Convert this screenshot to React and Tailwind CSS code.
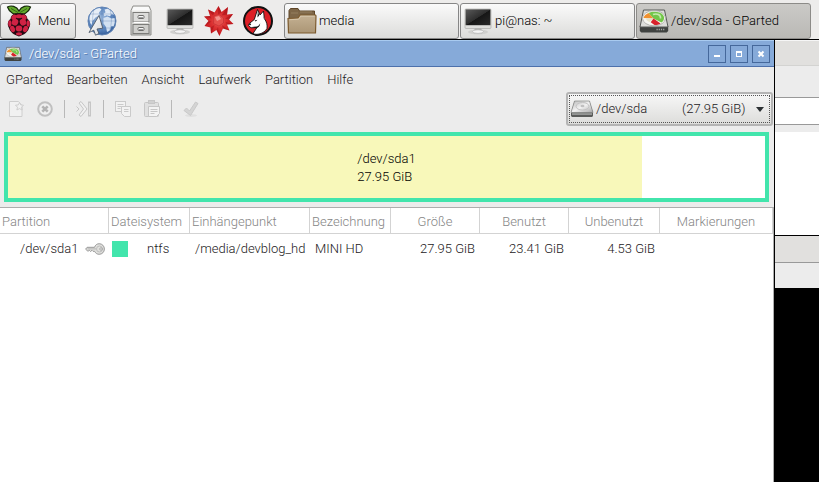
import { useState } from "react";

const MonitorIcon = () => (
  <svg width="28" height="28" viewBox="0 0 28 28" aria-hidden="true">
    <defs>
      <linearGradient id="screen" x1="0" y1="0" x2="1" y2="1">
        <stop offset="0" stopColor="#5a5a5a" />
        <stop offset="0.5" stopColor="#2e2e2e" />
        <stop offset="0.52" stopColor="#161616" />
        <stop offset="1" stopColor="#2a2a2a" />
      </linearGradient>
    </defs>
    <ellipse cx="14" cy="25" rx="10" ry="2.6" fill="#d0d0ce" />
    <path d="M11 21h6l1 3h-8z" fill="#b4b4b2" />
    <ellipse cx="14" cy="24.6" rx="5.5" ry="1.8" fill="#f4f4f4" stroke="#aaa" strokeWidth="0.6" />
    <rect x="1" y="2" width="26" height="19.5" rx="1" fill="#dededc" stroke="#a5a5a3" strokeWidth="0.6" />
    <rect x="1.6" y="2.4" width="24.8" height="15.8" fill="url(#screen)" />
  </svg>
);

const RaspberryIcon = () => (
  <svg width="26" height="32" viewBox="0 0 26 32" aria-hidden="true">
    <path
      d="M13 8.500C9 10.500 3.500 8 1.500 2c3.500-2 9-1 11.500 4 2.500-5 8-6 11.500-4-2 6-7.500 8.500-11.500 6.500z"
      fill="#64ab2c"
      stroke="#16280c"
      strokeWidth="1.200"
    />
    <path d="M5 3.500l7 4M21 3.500l-7 4" stroke="#25480f" strokeWidth="0.7" />
    <path
      d="M13 8.500c4-1 8 1 8.500 5.500 3 2 3.500 6 1.500 9-1 4-5 7-10 8.500-5-1.500-9-4.500-10-8.500-2-3-1.500-7 1.500-9C5 9.500 9 7.500 13 8.500z"
      fill="#250911"
    />
    <g fill="#d02244">
      <ellipse cx="13" cy="11.200" rx="3.200" ry="2" />
      <ellipse cx="8" cy="12.200" rx="2.300" ry="2.900" transform="rotate(40 8 12.200)" />
      <ellipse cx="18" cy="12.200" rx="2.300" ry="2.900" transform="rotate(-40 18 12.200)" />
      <ellipse cx="9" cy="17.200" rx="3.200" ry="3.500" transform="rotate(25 9 17.200)" />
      <ellipse cx="17" cy="17.200" rx="3.200" ry="3.500" transform="rotate(-25 17 17.200)" />
      <ellipse cx="3.800" cy="18.500" rx="1.600" ry="3.200" />
      <ellipse cx="22.200" cy="18.500" rx="1.600" ry="3.200" />
      <ellipse cx="13" cy="23.500" rx="3.300" ry="3" />
      <ellipse cx="6.600" cy="24" rx="2.300" ry="3.200" transform="rotate(-25 6.600 24)" />
      <ellipse cx="19.400" cy="24" rx="2.300" ry="3.200" transform="rotate(25 19.400 24)" />
      <ellipse cx="13" cy="28.800" rx="3" ry="1.600" />
    </g>
  </svg>
);

const GlobeIcon = () => (
  <svg width="30" height="30" viewBox="0 0 30 30" aria-hidden="true">
    <defs>
      <radialGradient id="ocean" cx="0.45" cy="0.4" r="0.62">
        <stop offset="0" stopColor="#9dbbdf" />
        <stop offset="0.7" stopColor="#5a84bc" />
        <stop offset="1" stopColor="#315a96" />
      </radialGradient>
      <linearGradient id="pointer" x1="0" y1="0" x2="1" y2="1">
        <stop offset="0" stopColor="#ffffff" />
        <stop offset="1" stopColor="#d8dadd" />
      </linearGradient>
    </defs>
    <circle cx="15" cy="15" r="14" fill="url(#ocean)" stroke="#6385b5" />
    <path d="M2.500 12C3 7 7 2.800 12.500 2l2 1.500-2.500 3 .5 2.500-4 2.500-3 3.500-1 4c-1.500-2-2.200-4.500-2-7z" fill="#e6eef7" />
    <path d="M17.500 3.500l3-.8c3 1.300 5.200 3.300 6.500 6l-2.500-.5-1.500 2-3.500-1-2 1-1-2.500 2-1.500z" fill="#dfe9f5" />
    <path d="M16.500 12l4-1.500 4 2 3-.5c.8 3 .3 6-1 8.500l-2-.5-1.500 4.500-3 1.500-1-5-2.500-3.500z" fill="#d3e1f1" />
    <path d="M15 1v28M7 3.500C5 11 5 19 8 27M23 3.500c2 8 2 15-1 23M3 8h24M1 15h28M3 22h24" stroke="#41679f" strokeWidth="0.4" fill="none" opacity="0.7" />
    <path
      d="M12 9.500L2 26.500l4.800-2.300 1.700 5 3.500-1.700-2-4.500 5.800-.8z"
      fill="url(#pointer)"
      stroke="#4e5a6a"
      strokeWidth="0.9"
    />
  </svg>
);

const CabinetIcon = () => (
  <svg width="24" height="32" viewBox="0 0 24 32" aria-hidden="true">
    <defs>
      <linearGradient id="metal" x1="0" y1="0" x2="0" y2="1">
        <stop offset="0" stopColor="#f1f1ef" />
        <stop offset="1" stopColor="#c4c4c1" />
      </linearGradient>
    </defs>
    <path d="M4 1h16l2 4.500V30H2V5.500z" fill="url(#metal)" stroke="#8f8f8c" />
    <path d="M4.600 2h14.800l1.400 3.500H3.200z" fill="#fafafa" />
    <rect x="4" y="7.500" width="16" height="9.500" fill="#dcdcda" stroke="#7d7d7a" />
    <rect x="4" y="19.500" width="16" height="9" fill="#cfcfcc" stroke="#7d7d7a" />
    <path d="M4.500 17.500h15" stroke="#fff" />
    <rect x="9" y="10.500" width="6" height="3" rx="1" fill="#f7f7f7" stroke="#6c6c6a" />
    <rect x="9" y="22.500" width="6" height="3" rx="1" fill="#f7f7f7" stroke="#6c6c6a" />
    <path d="M10 12.500h4M10 24.500h4" stroke="#777" strokeWidth="0.7" />
  </svg>
);

const BurstIcon = () => (
  <svg width="30" height="32" viewBox="0 0 30 32" aria-hidden="true">
    <defs>
      <radialGradient id="burst">
        <stop offset="0" stopColor="#f0706a" />
        <stop offset="0.45" stopColor="#dd3434" />
        <stop offset="1" stopColor="#c4161c" />
      </radialGradient>
    </defs>
    <path
      d="M14.500 1l3 6 6.500-5-1 7.500 6-.5-4 5.500 4.500 4.500-6.500.5 2.500 6-6.500-2-3.500 7.500-3-6-5.500 3.500-.5-6L.5 21l4-5L0 11.500 6 11 4 4.500l6.500 3z"
      fill="url(#burst)"
    />
    <path
      d="M14.500 1l-.5 9 3.500-3zM24 2l-6.500 8.500L23 9.500zM29 9l-8 4.500 4 1zM29.500 19l-8-2 1.500 2.500zM25.500 25.500L18 20l1 3.500zM15.500 31l-1.500-9-1.500 3zM7 28.500L10.500 20l-4 2.500zM.5 21l7-4.500-3-.5zM0 11.500l7.500 2L6 11zM4 4.500l5 6 1.500-3z"
      fill="#a01016"
      opacity="0.5"
    />
    <path d="M10 11l5-1.500 4.500 3.500v5l-4.500 3-5.500-2.500z" fill="#e5504c" stroke="#b8242a" strokeWidth="0.5" />
    <path d="M11 12l4-1 2 3-4 2z" fill="#f4928c" />
  </svg>
);

const WolfIcon = () => (
  <svg width="32" height="32" viewBox="0 0 32 32" aria-hidden="true">
    <circle cx="16" cy="16" r="14" fill="#dc1f26" stroke="#111" strokeWidth="2" />
    <path
      d="M15.500 4.500l2.500 5.500 3.500-4 .8 7.500c2.500 3.500 3.200 6.500 2.700 10C22 29 14 30.500 11 28.500l4-6-6 .3-2.500-2.300.8-2 5-4z"
      fill="#fff"
      stroke="#111"
      strokeWidth="0.9"
    />
    <path d="M15.800 6.500l1.400 4-1.700 2z" fill="#111" />
    <path d="M12.500 15.500l3-.7-1.800 1.600z" fill="#111" />
    <path d="M6.800 19.200l1.400-1 1 1-1.200 1.200zM10 22l5-.6c1.500-.6 2.500-1.700 3.200-3.200 0 3-2 4.800-4.200 5z" fill="#111" />
    <path d="M21 8l.3 4.500 1.200 1.500z" fill="#999" />
  </svg>
);

const FolderIcon = () => (
  <svg width="30" height="28" viewBox="0 0 30 28" aria-hidden="true">
    <defs>
      <linearGradient id="folder" x1="0" y1="0" x2="0" y2="1">
        <stop offset="0" stopColor="#c4b193" />
        <stop offset="1" stopColor="#ab9675" />
      </linearGradient>
    </defs>
    <path d="M2 25V3.500l1.500-2H11L12.500 4h15v9z" fill="#7e6748" stroke="#5f4628" />
    <path d="M13 5h12M4 6h7" stroke="#95805f" />
    <path
      d="M1 11.500L11 11l2-3h15.500l.5 1-.5 17H1.500z"
      fill="url(#folder)"
      stroke="#7d5a2d"
      strokeWidth="1.200"
    />
    <path d="M2.500 12.700l9.200-.5 2-3h14" stroke="#dccdb3" fill="none" strokeWidth="0.8" />
  </svg>
);

const GPartedIcon = ({ className }) => (
  <svg className={className} viewBox="0 0 30 24" aria-hidden="true">
    <path d="M.8 17h28.400v5l-1.500 1.500H2.300L.8 22z" fill="#3f4240" />
    <path d="M4.500 1h21L29 18H1z" fill="#dcddda" stroke="#565856" />
    <ellipse cx="15" cy="9.200" rx="11.500" ry="7.600" fill="#f6f6f2" stroke="#9b9b98" strokeWidth="0.7" />
    <path d="M14.500 9.500L9.500 4C14 1.800 21 2.300 24 6c2 2.800 1 5.500-1.500 7.500z" fill="#72c64a" />
    <path d="M14 5.500c4-1.500 8 .3 7.500 4" stroke="#c4eaae" strokeWidth="1.600" fill="none" />
    <path d="M14.500 9.500L4.500 9c.5-2.300 2.500-4 5-5z" fill="#f0912f" />
    <path d="M7 9.200l7.500.3-4 3.500C8.500 12.200 7.200 11 7 9.200z" fill="#e6e3c8" />
    <path d="M14.500 9.500l-2.800 3.800 3.800 2.700c2.500 0 4.500-.5 6-1.500z" fill="#d8222b" />
    <path d="M17.500 20.500h8" stroke="#a5a8a5" strokeWidth="1.400" strokeDasharray="1.200 1" />
  </svg>
);

const DriveIcon = () => (
  <svg width="24" height="18" viewBox="0 0 24 18" aria-hidden="true">
    <defs>
      <linearGradient id="drive" x1="0" y1="0" x2="1" y2="1">
        <stop offset="0" stopColor="#b8b8b8" />
        <stop offset="0.5" stopColor="#f2f2f2" />
        <stop offset="1" stopColor="#a8a8a8" />
      </linearGradient>
    </defs>
    <path d="M4.500 1h15L23 12.500v3.500l-1 1H2l-1-1v-3.500z" fill="#5a5c5a" />
    <path d="M4.500 1h15L23 12.500H1z" fill="url(#drive)" stroke="#858785" strokeWidth="0.7" />
    <ellipse cx="12.500" cy="6.300" rx="6.500" ry="3.800" fill="none" stroke="#c2c2c2" />
    <ellipse cx="12.500" cy="6" rx="2" ry="1.200" fill="#c0c0c0" />
    <path d="M2 13.300h20v1.500H2z" fill="#a4a6a4" />
  </svg>
);

const KeyIcon = () => (
  <svg width="20" height="12" viewBox="0 0 20 12" aria-hidden="true">
    <path
      d="M9.500 4.300C10.300 2 12 .7 14.200.7c2.900 0 5.200 2.300 5.200 5.300s-2.300 5.300-5.200 5.300c-2 0-3.700-1-4.600-3H8l-1-1-1.500 1.200-1.200-1.200L3 8.300.6 6.200l1.500-1.900z"
      fill="#e0e0dd"
      stroke="#858585"
      strokeWidth="0.8"
    />
    <circle cx="14.500" cy="6" r="3" fill="none" stroke="#b5b5b5" strokeWidth="0.8" />
    <circle cx="16" cy="6" r="1.200" fill="#fff" stroke="#777" strokeWidth="0.6" />
    <path d="M2.500 5.900H11" stroke="#999" strokeWidth="0.6" />
  </svg>
);

const NewIcon = () => (
  <svg width="18" height="18" viewBox="0 0 18 18" fill="#f1f1f1" stroke="#cecece" aria-hidden="true">
    <path d="M2.500 1.500h9l3.500 4v11h-12.500z" />
    <path d="M12.500 2.500l1.200 2.400 2.800.3-2 2 .6 2.800-2.600-1.400-2.600 1.400.6-2.800-2-2 2.800-.3z" />
  </svg>
);

const DeleteIcon = () => (
  <svg width="18" height="18" viewBox="0 0 18 18" aria-hidden="true">
    <circle cx="9" cy="9" r="6.800" fill="#efefef" stroke="#c0c0c0" strokeWidth="2" />
    <path d="M6.300 6.300l5.400 5.400M11.700 6.300l-5.400 5.400" stroke="#b3b3b3" strokeWidth="2.600" />
  </svg>
);

const ResizeIcon = () => (
  <svg width="18" height="18" viewBox="0 0 18 18" fill="#f1f1f1" stroke="#c6c6c6" aria-hidden="true">
    <path d="M4 3l2-1.500 6 7.500-6 7.500L4 15l4.500-6z" />
    <path d="M1.500 6.500L4 9l-2.500 2.500" fill="none" />
    <rect x="13.500" y="2" width="2" height="14" fill="#e0e0e0" />
  </svg>
);

const CopyIcon = () => (
  <svg width="18" height="18" viewBox="0 0 18 18" fill="#f2f2f2" stroke="#cacaca" aria-hidden="true">
    <rect x="1.500" y="1.500" width="10" height="10" />
    <path d="M3.500 4.500h6M3.500 6.500h6M3.500 8.500h3" />
    <path d="M7.500 6.500h9v10h-6l-3-3z" />
    <path d="M10 9.500h4.500M10 11.500h4.500" />
  </svg>
);

const PasteIcon = () => (
  <svg width="18" height="18" viewBox="0 0 18 18" fill="#e0e0e0" stroke="#c6c6c6" aria-hidden="true">
    <rect x="1.500" y="2.500" width="14" height="14" rx="1" />
    <rect x="5.500" y="0.500" width="6" height="3" fill="#d0d0d0" />
    <path d="M5.500 6.500h11v7l-3 3h-8z" fill="#f3f3f3" />
    <path d="M7.500 9.500h7M7.500 11.500h7M7.500 13.500h4" />
  </svg>
);

const ApplyIcon = () => (
  <svg width="18" height="18" viewBox="0 0 18 18" aria-hidden="true">
    <ellipse cx="9" cy="15.500" rx="6" ry="1.500" fill="#e0e0e0" />
    <path d="M2 10.500L4.500 8l3 3 6-9 2.500 1.500-7.500 12z" fill="#d4d4d4" stroke="#c9c9c9" strokeLinejoin="round" />
  </svg>
);

const Separator = () => <div className="-mx-px h-[18px] w-px bg-[#b8b8b8]" />;

const menus = ["GParted", "Bearbeiten", "Ansicht", "Laufwerk", "Partition", "Hilfe"];

const launchers = [
  { label: "Web", icon: <GlobeIcon /> },
  { label: "Dateien", icon: <CabinetIcon /> },
  { label: "Terminal", icon: <MonitorIcon /> },
  { label: "Mathematica", icon: <BurstIcon /> },
  { label: "Wolfram", icon: <WolfIcon /> },
];

const tasks = [
  { title: "media", icon: <FolderIcon /> },
  { title: "pi@nas: ~", icon: <MonitorIcon /> },
  { title: "/dev/sda - GParted", icon: <GPartedIcon className="h-6 w-[30px]" />, active: true },
];

const partitions = [
  {
    name: "/dev/sda1",
    fs: "ntfs",
    mount: "/media/devblog_hd",
    label: "MINI HD",
    size: "27.95 GiB",
    used: "23.41 GiB",
    unused: "4.53 GiB",
    usedPercent: 83.75,
  },
];

const columns = [
  { title: "Partition", className: "w-[109px] pl-[2px] text-left" },
  { title: "Dateisystem", className: "w-[81px] pl-[2px] text-left" },
  { title: "Einhängepunkt", className: "w-[120px] pl-[2px] text-left" },
  { title: "Bezeichnung", className: "w-[81px] pl-[2px] text-left" },
  { title: "Größe", className: "w-[89px] text-center" },
  { title: "Benutzt", className: "w-[89px] text-center" },
  { title: "Unbenutzt", className: "w-[91px] text-center" },
  { title: "Markierungen", className: "text-center" },
];

const Taskbar = () => (
  <header className="flex h-10 items-end border-b border-black bg-[#edeceb] text-black">
    <button
      type="button"
      className="flex h-9 w-[76px] shrink-0 items-center gap-[6px] rounded-[3px] border border-[#868686] bg-linear-to-b from-[#fafafa] to-[#dcdcda] pl-[5px]"
    >
      <RaspberryIcon />
      Menu
    </button>
    <nav className="ml-[6px] flex h-9 shrink-0 items-center">
      {launchers.map((item) => (
        <button
          key={item.label}
          type="button"
          aria-label={item.label}
          className="flex w-[39px] justify-center"
        >
          {item.icon}
        </button>
      ))}
    </nav>
    <div className="ml-[7px] flex min-w-0 flex-1 gap-px">
      {tasks.map((task) => (
        <button
          key={task.title}
          type="button"
          className={`flex h-9 w-[175px] items-center gap-[2px] rounded-[3px] border pl-[2px] ${
            task.active
              ? "border-[#8c8b88] bg-linear-to-b from-[#cbcac7] to-[#bab9b5]"
              : "border-[#868686] bg-linear-to-b from-[#fafafa] to-[#dcdcda]"
          }`}
        >
          <span className="flex w-[30px] justify-center">{task.icon}</span>
          {task.title}
        </button>
      ))}
    </div>
  </header>
);

const TitleBar = () => (
  <div className="flex h-[27px] items-center border-t border-b border-t-[#a9cbf0] border-b-[#4d70ab] bg-[#86aad9] pr-1 pl-1 text-white">
    <GPartedIcon className="h-4 w-[18px]" />
    <h1 className="ml-[7px] flex-1 text-[13px] font-light [text-shadow:1px_1px_0_#5578ac]">
      /dev/sda - GParted
    </h1>
    <div className="flex gap-1">
      <button
        type="button"
        aria-label="Minimieren"
        className="flex size-[18px] items-center justify-center border border-[#45689b]"
      >
        <svg width="8" height="8" viewBox="0 0 8 8" aria-hidden="true">
          <path d="M1 5h6v2H1z" fill="#fff" />
        </svg>
      </button>
      <button
        type="button"
        aria-label="Maximieren"
        className="flex size-[18px] items-center justify-center border border-[#45689b]"
      >
        <svg width="8" height="8" viewBox="0 0 8 8" aria-hidden="true">
          <path d="M1 1h6v6H1zM2 3v3h4V3z" fill="#fff" fillRule="evenodd" />
        </svg>
      </button>
      <button
        type="button"
        aria-label="Schließen"
        className="flex size-[18px] items-center justify-center border border-[#45689b]"
      >
        <svg width="8" height="8" viewBox="0 0 8 8" aria-hidden="true">
          <path d="M1.500 1.500l5 5M6.500 1.500l-5 5" stroke="#fff" strokeWidth="2" />
        </svg>
      </button>
    </div>
  </div>
);

const DriveSelect = () => {
  const [drive, setDrive] = useState("/dev/sda");

  return (
    <label className="block rounded-[3px] border-2 border-[#b4b4b4] bg-linear-to-b from-[#f7f7f7] to-[#dddddb] p-px">
      <span className="flex h-7 items-center border border-dotted border-[#555]">
        <DriveIcon />
        <select
          aria-label="Laufwerk"
          value={drive}
          onChange={(e) => setDrive(e.target.value)}
          className="h-6 w-[162px] appearance-none bg-transparent pl-[2px] outline-none"
        >
          <option value="/dev/sda">
            {"/dev/sda" + "\u00a0".repeat(11) + "(27.95 GiB)"}
          </option>
        </select>
        <svg className="mr-[5px] ml-auto" width="8" height="5" viewBox="0 0 8 5" aria-hidden="true">
          <path d="M0 0h8L4 5z" fill="#2c3133" />
        </svg>
      </span>
    </label>
  );
};

const Toolbar = () => (
  <div className="flex h-9 items-center pr-px pl-[7px]">
    <div className="flex flex-1 items-center gap-[11px]">
      <button type="button" aria-label="Neu" disabled><NewIcon /></button>
      <button type="button" aria-label="Löschen" disabled><DeleteIcon /></button>
      <Separator />
      <button type="button" aria-label="Größe ändern" disabled><ResizeIcon /></button>
      <Separator />
      <button type="button" aria-label="Kopieren" disabled><CopyIcon /></button>
      <button type="button" aria-label="Einfügen" disabled><PasteIcon /></button>
      <Separator />
      <button type="button" aria-label="Anwenden" disabled><ApplyIcon /></button>
    </div>
    <DriveSelect />
  </div>
);

const DiskMap = () => {
  const part = partitions[0];

  return (
    <div className="pt-[5px] pr-[5px] pb-[5px] pl-1">
      <div className="grid h-[70px] border-4 border-[#42e5ac] bg-white text-black">
        <div
          className="col-start-1 row-start-1 bg-[#f8f8ba]"
          style={{ width: `${part.usedPercent}%` }}
        />
        <div className="col-start-1 row-start-1 flex items-center justify-center pt-[2px] leading-[18px]">
          <p>
            {part.name}
            <br />
            {part.size}
          </p>
        </div>
      </div>
    </div>
  );
};

const PartitionTable = () => (
  <div className="flex-1 border-t border-r border-[#adadad] bg-white">
    <table className="w-full table-fixed border-separate border-spacing-0 whitespace-nowrap">
      <thead>
        <tr className="h-[26px] text-[#858585]">
          {columns.map((col) => (
            <th
              key={col.title}
              scope="col"
              className={`border-r border-b border-[#d3d3d3] pt-[2px] pb-0 font-light ${col.className}`}
            >
              {col.title}
            </th>
          ))}
        </tr>
      </thead>
      <tbody>
        {partitions.map((part) => (
          <tr key={part.name} className="h-[29px]">
            <td className="p-0 pl-5">
              <div className="flex items-center gap-[7px]">
                {part.name}
                <KeyIcon />
              </div>
            </td>
            <td className="p-0 pl-[3px]">
              <div className="flex items-center gap-[19px]">
                <span className="size-4 bg-[#42e5ac]" />
                {part.fs}
              </div>
            </td>
            <td className="p-0 pl-[5px]">{part.mount}</td>
            <td className="p-0 pl-[5px]">{part.label}</td>
            <td className="p-0 pr-[5px] text-right">{part.size}</td>
            <td className="p-0 pr-[5px] text-right">{part.used}</td>
            <td className="p-0 pr-[5px] text-right">{part.unused}</td>
            <td className="p-0" />
          </tr>
        ))}
      </tbody>
    </table>
  </div>
);

// The file manager window that sticks out behind GParted
const BackgroundWindow = () => (
  <div className="w-11 shrink-0 bg-black">
    <div className="h-[26px] border-t border-b border-t-[#f6f6f6] border-b-[#d3d3d1] bg-[#e1e0de]" />
    <div className="h-[31px] bg-[#ececec]" />
    <div className="h-7 border-t border-b border-[#999] bg-white" />
    <div className="h-[7px] bg-[#ececec]" />
    <div className="h-[103px] bg-white" />
    <div className="h-7 border-t border-b border-t-black border-b-[#999] bg-[#e1e0de]" />
    <div className="h-[25px] bg-[#ececec]" />
  </div>
);

export default function App() {
  return (
    <div className="flex min-h-screen flex-col bg-black font-[Roboto,sans-serif] text-[13px] font-light text-[#1c2022]">
      <Taskbar />
      <main className="flex flex-1">
        <section className="flex min-w-0 flex-1 flex-col border-r border-black bg-[#ececec]">
          <TitleBar />
          <nav className="flex h-6 items-center gap-[14px] pt-[2px] pl-[6px]">
            {menus.map((menu) => (
              <button key={menu} type="button">
                {menu}
              </button>
            ))}
          </nav>
          <Toolbar />
          <DiskMap />
          <PartitionTable />
        </section>
        <BackgroundWindow />
      </main>
    </div>
  );
}
